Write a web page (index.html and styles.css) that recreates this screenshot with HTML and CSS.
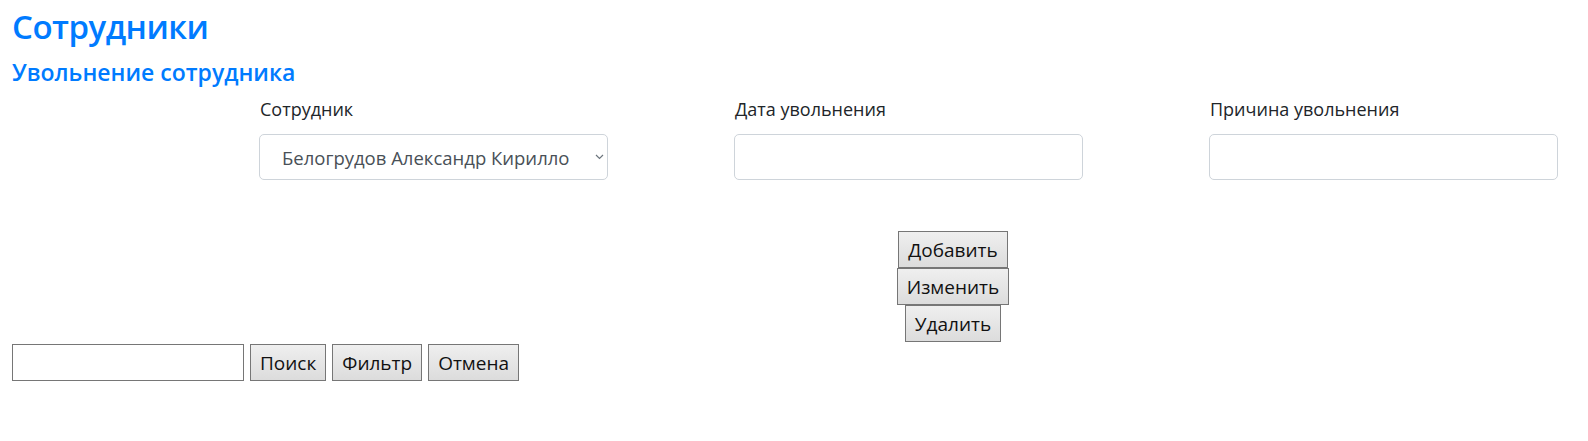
FILE: index.html
```html
<!DOCTYPE html>
<html lang="ru">
<head>
<meta charset="utf-8">
<title>Сотрудники</title>
<link rel="stylesheet" href="styles.css">
</head>
<body>
<div class="page">
  <h1 class="title">Сотрудники</h1>
  <h2 class="subtitle">Увольнение сотрудника</h2>

  <div class="form-row">
    <div class="field">
      <label class="field-label" for="emp">Сотрудник</label>
      <div class="select-wrap">
        <select id="emp" class="control select">
          <option>Белогрудов Александр Кириллович</option>
        </select>
        <svg class="chevron" width="9" height="6" viewBox="0 0 9 6"><path d="M1 1l3.5 3.5L8 1" fill="none" stroke="#6c757d" stroke-width="1.2"/></svg>
      </div>
    </div>
    <div class="field">
      <label class="field-label" for="date">Дата увольнения</label>
      <input id="date" class="control" type="text">
    </div>
    <div class="field">
      <label class="field-label" for="reason">Причина увольнения</label>
      <input id="reason" class="control" type="text">
    </div>
  </div>

  <div class="actions">
    <button class="btn" type="button">Добавить</button>
    <button class="btn" type="button">Изменить</button>
    <button class="btn" type="button">Удалить</button>
  </div>

  <div class="search-row">
    <input class="search-input" type="text">
    <button class="btn" type="button">Поиск</button>
    <button class="btn" type="button">Фильтр</button>
    <button class="btn" type="button">Отмена</button>
  </div>
</div>
</body>
</html>
```

FILE: styles.css
```css
* { box-sizing: border-box; }

body {
  margin: 0;
  background: #fff;
  font-family: "Open Sans", "Noto Sans", "DejaVu Sans", sans-serif;
  color: #212529;
}

.page {
  padding: 0 12px;
}

.title {
  margin: 5px 0 0;
  font-size: 33px;
  line-height: 43px;
  font-weight: 600;
  color: #007bff;
  letter-spacing: -0.5px;
}

.subtitle {
  margin: 10px 0 0;
  font-size: 23px;
  line-height: 28px;
  font-weight: 600;
  color: #007bff;
  letter-spacing: 0;
}

.form-row {
  display: flex;
  gap: 126px;
  padding-left: 247px;
  margin-top: 10px;
}

.field {
  width: 349px;
  display: flex;
  flex-direction: column;
}

.field-label {
  display: block;
  font-size: 18px;
  line-height: 27px;
  padding-left: 1px;
  color: #212529;
  margin-bottom: 11px;
}

.control {
  width: 349px;
  height: 46px;
  border: 1px solid #ced4da;
  border-radius: 5px;
  background: #fff;
  font-family: inherit;
  font-size: 18px;
  color: #495057;
  padding: 0 14px;
  outline: none;
}

.select-wrap {
  position: relative;
  width: 349px;
}

.select {
  -webkit-appearance: none;
  appearance: none;
  padding: 0 37px 0 22px;
  font-size: 18.5px;
  letter-spacing: 0;
}

.chevron {
  position: absolute;
  right: 4px;
  top: 20px;
}

.actions {
  display: flex;
  flex-direction: column;
  align-items: center;
  padding-left: 318px;
  margin-top: 51px;
}

.btn {
  height: 37px;
  padding: 0 9px;
  border: 1px solid #767676;
  border-radius: 0;
  background: linear-gradient(#efefef, #dcdcdc);
  font-family: inherit;
  font-size: 19px;
  color: #111;
  margin: 0;
  cursor: pointer;
}

.search-row {
  display: flex;
  gap: 6px;
  margin-top: 2px;
}

.search-input {
  width: 232px;
  height: 37px;
  border: 1px solid #767676;
  background: #fff;
  outline: none;
}
```
